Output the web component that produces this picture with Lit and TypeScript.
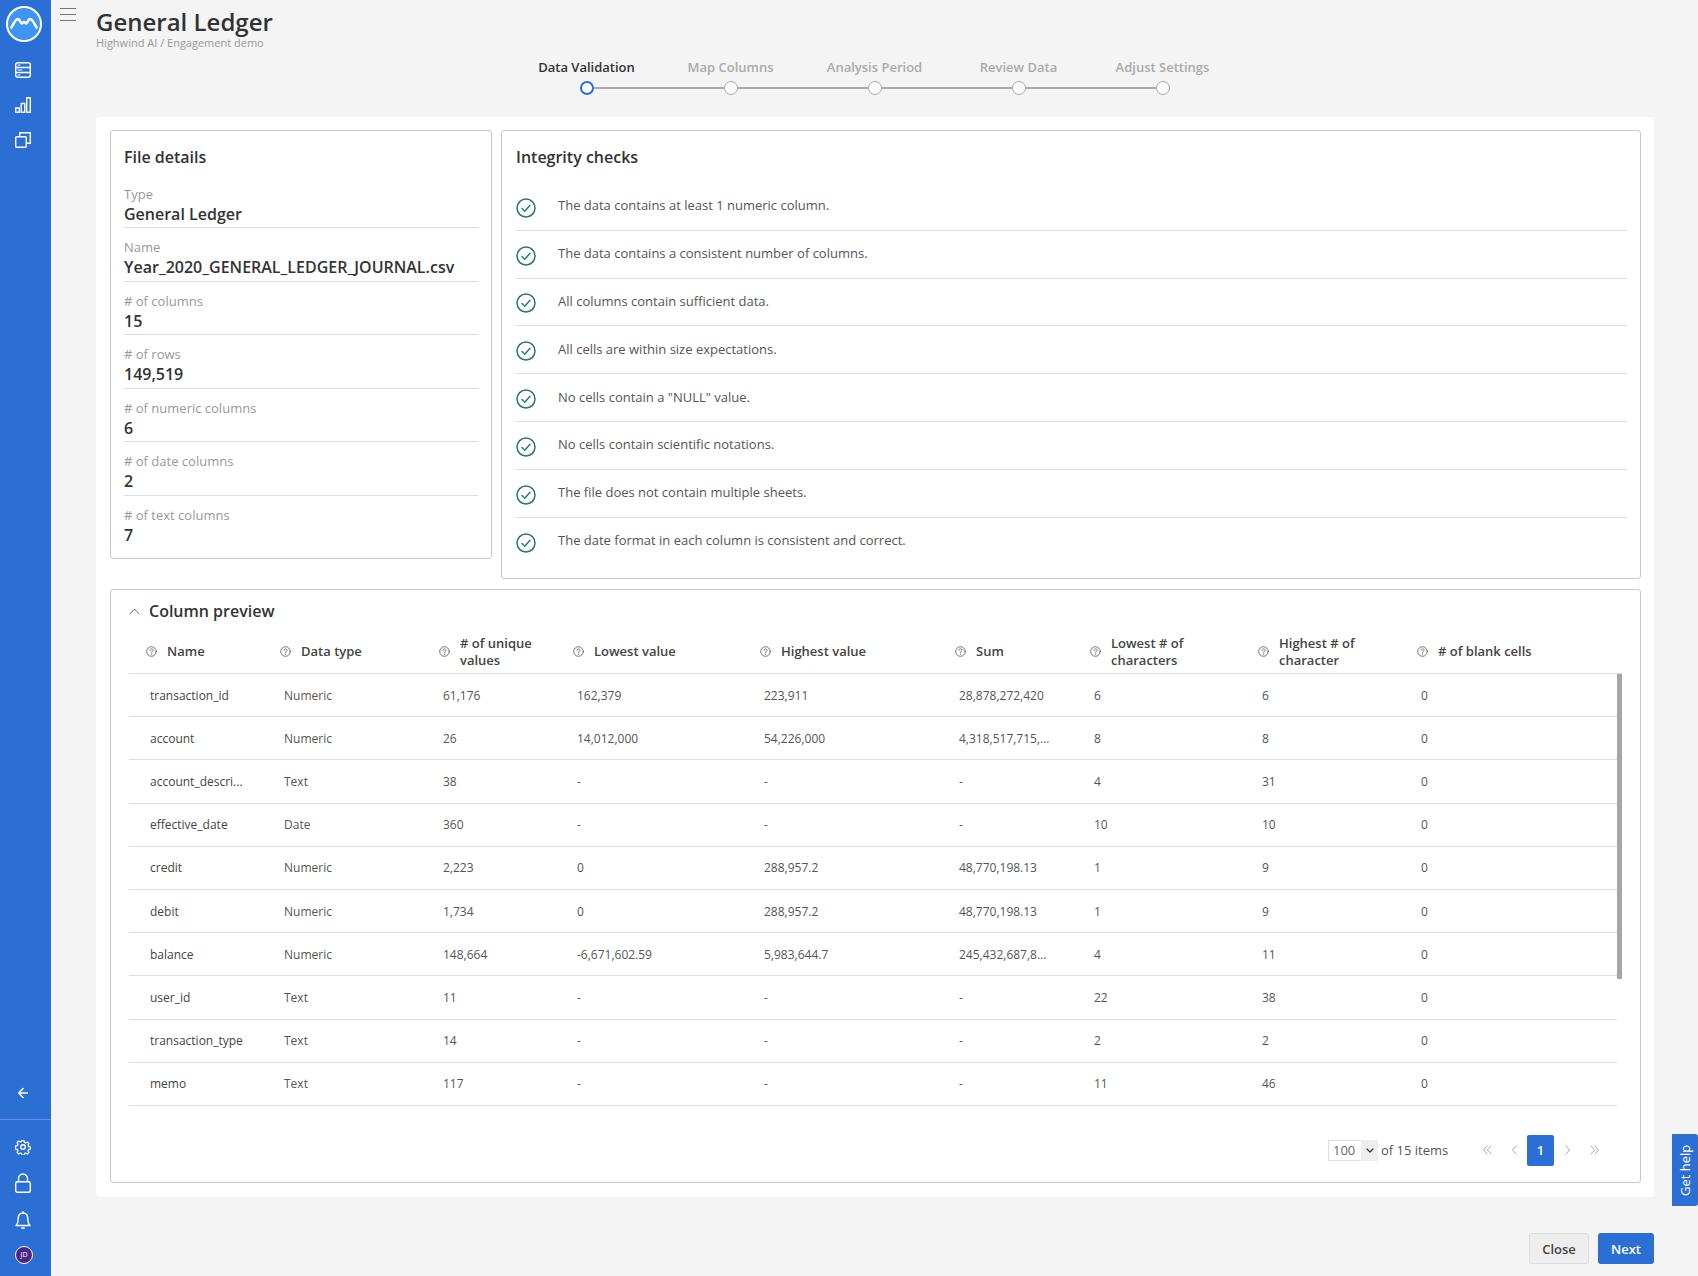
import { LitElement, html, css, svg } from 'lit';
import { customElement } from 'lit/decorators.js';

const steps = ['Data Validation', 'Map Columns', 'Analysis Period', 'Review Data', 'Adjust Settings'];

const details = [
  ['Type', 'General Ledger'],
  ['Name', 'Year_2020_GENERAL_LEDGER_JOURNAL.csv'],
  ['# of columns', '15'],
  ['# of rows', '149,519'],
  ['# of numeric columns', '6'],
  ['# of date columns', '2'],
  ['# of text columns', '7'],
];

const checks = [
  'The data contains at least 1 numeric column.',
  'The data contains a consistent number of columns.',
  'All columns contain sufficient data.',
  'All cells are within size expectations.',
  'No cells contain a "NULL" value.',
  'No cells contain scientific notations.',
  'The file does not contain multiple sheets.',
  'The date format in each column is consistent and correct.',
];

const headers = [
  ['Name'],
  ['Data type'],
  ['# of unique', 'values'],
  ['Lowest value'],
  ['Highest value'],
  ['Sum'],
  ['Lowest # of', 'characters'],
  ['Highest # of', 'character'],
  ['# of blank cells'],
];

const rows = [
  ['transaction_id', 'Numeric', '61,176', '162,379', '223,911', '28,878,272,420', '6', '6', '0'],
  ['account', 'Numeric', '26', '14,012,000', '54,226,000', '4,318,517,715,...', '8', '8', '0'],
  ['account_descri...', 'Text', '38', '-', '-', '-', '4', '31', '0'],
  ['effective_date', 'Date', '360', '-', '-', '-', '10', '10', '0'],
  ['credit', 'Numeric', '2,223', '0', '288,957.2', '48,770,198.13', '1', '9', '0'],
  ['debit', 'Numeric', '1,734', '0', '288,957.2', '48,770,198.13', '1', '9', '0'],
  ['balance', 'Numeric', '148,664', '-6,671,602.59', '5,983,644.7', '245,432,687,8...', '4', '11', '0'],
  ['user_id', 'Text', '11', '-', '-', '-', '22', '38', '0'],
  ['transaction_type', 'Text', '14', '-', '-', '-', '2', '2', '0'],
  ['memo', 'Text', '117', '-', '-', '-', '11', '46', '0'],
];

const icon = (w: number, h: number, body: unknown) => html`
  <svg width=${w} height=${h} viewBox="0 0 ${w} ${h}" fill="none" stroke="currentColor" stroke-width="1.4"
    stroke-linecap="round" stroke-linejoin="round">${body}</svg>`;

const helpIcon = icon(11, 11, svg`
  <circle cx="5.5" cy="5.5" r="4.8" stroke-width="0.8" />
  <path d="M4 4.3c0-1 .7-1.5 1.5-1.5s1.5.5 1.5 1.4c0 1.2-1.5 1.2-1.5 2.5" stroke-width="0.8" />
  <path d="M5.5 8.1v.2" stroke-width="0.9" />`);

const checkIcon = icon(20, 20, svg`
  <circle cx="10" cy="10" r="9" stroke-width="1.5" />
  <path d="M6 10.4l2.8 2.8 5.2-6" stroke-width="1.4" />`);

@customElement('app-root')
export class AppRoot extends LitElement {
  static styles = css`
    :host {
      display: flex;
      width: 1698px;
      min-height: 1276px;
      background: #f4f4f4;
      font-family: 'Open Sans', sans-serif;
      color: #333;
      position: relative;
    }

    .sidebar {
      width: 51px;
      height: 1276px;
      flex: none;
      background: #2c6fd4;
      color: #fff;
      display: flex;
      flex-direction: column;
      box-sizing: border-box;
      padding-left: 15px;
    }
    .sidebar svg { display: block; }
    .logo { margin: 6px 0 0 -9px; height: 36px; }
    .nav { display: flex; flex-direction: column; gap: 19px; margin-top: 20px; }
    .spacer { flex: 1; }
    .back { padding-left: 3px; height: 12px; margin-bottom: 20px; }
    .rule { height: 1px; background: #5b93e3; margin: 0 0 19px -15px; }
    .bottom { display: flex; flex-direction: column; align-items: flex-start; }
    .avatar {
      width: 18px;
      height: 18px;
      box-sizing: border-box;
      border-radius: 50%;
      border: 1px solid #fff;
      background: #4a2586;
      font-size: 7px;
      line-height: 16px;
      text-align: center;
      margin: 17px 0 12px;
    }

    .main { flex: 1; display: flex; flex-direction: column; min-width: 0; }

    .top { display: flex; height: 55px; padding-left: 9px; }
    .burger { width: 16px; margin: 8px 20px 0 0; color: #777; }
    .burger span { display: block; height: 1px; background: #777; margin-bottom: 5px; }
    h1 { margin: 8px 0 0; font-size: 24px; line-height: 28px; font-weight: 600; color: #333; }
    .crumb { font-size: 11px; line-height: 14px; color: #999; margin-top: 0; }

    .stepper { width: 720px; margin: 0 auto; height: 62px; }
    .labels { display: grid; grid-template-columns: repeat(5, 144px); height: 26px; }
    .labels div { text-align: center; font-size: 13px; line-height: 24px; font-weight: 600; color: #aaa; }
    .labels .on { color: #333; }
    .track { display: flex; align-items: center; padding-left: 65px; }
    .dot {
      width: 14px;
      height: 14px;
      box-sizing: border-box;
      flex: none;
      border-radius: 50%;
      border: 1px solid #aaa;
      background: #fff;
    }
    .dot.on { border: 2px solid #2c6fd4; }
    .line { width: 130px; height: 2px; background: #aaa; flex: none; }

    .card {
      margin-left: 45px;
      width: 1558px;
      height: 1080px;
      box-sizing: border-box;
      background: #fff;
      border-radius: 4px;
      padding: 13px 13px 14px 14px;
      display: flex;
      flex-direction: column;
      gap: 10px;
    }
    .boxes { display: flex; gap: 9px; align-items: flex-start; }
    .box { border: 1px solid #c8c8c8; border-radius: 3px; box-sizing: border-box; background: #fff; }
    h2 { margin: 0; font-size: 16px; line-height: 24px; font-weight: 600; color: #333; }

    .file { width: 382px; height: 429px; padding: 14px 13px 0; }
    .file h2 { height: 29.5px; }
    .detail { height: 53.5px; box-sizing: border-box; padding-top: 9px; border-bottom: 1px solid #ddd; }
    .detail:last-child { border-bottom: 0; }
    .detail label { display: block; font-size: 13px; line-height: 20px; color: #999; }
    .detail div { font-size: 16px; line-height: 20px; font-weight: 600; color: #333; }

    .integrity { width: 1140px; height: 449px; padding: 14px 13px 0 14px; }
    .integrity h2 { height: 38px; }
    .check {
      height: 47.8px;
      box-sizing: border-box;
      display: flex;
      align-items: center;
      gap: 22px;
      border-bottom: 1px solid #ddd;
      font-size: 13px;
      color: #555;
    }
    .check:last-child { border-bottom: 0; }
    .check svg { color: #26786c; flex: none; margin-top: 3px; }
    .check span { margin-top: -2px; }

    .preview { height: 594px; padding: 0 0 0 18px; display: flex; flex-direction: column; }
    .preview-head { display: flex; align-items: center; gap: 9px; height: 40px; padding-top: 2px; box-sizing: border-box; }
    .preview-head svg { color: #666; margin-top: 1px; }
    .grid {
      display: grid;
      grid-template-columns: 134px 159px 134px 187px 195px 135px 168px 159px 217px;
      width: 1488px;
    }
    .thead { height: 43px; align-items: center; width: 1493px; border-bottom: 1px solid #ddd; box-sizing: content-box; }
    .th {
      display: flex;
      align-items: center;
      gap: 10px;
      padding-left: 17px;
      font-size: 13px;
      line-height: 17px;
      font-weight: 600;
      color: #444;
    }
    .th svg { flex: none; color: #555; }
    .tbody { position: relative; width: 1493px; }
    .thumb { position: absolute; left: 1488px; top: 0; width: 5px; height: 305px; background: #a6a6a6; }
    .row { height: 43.2px; box-sizing: border-box; border-bottom: 1px solid #ddd; align-items: center; }
    .td { padding-left: 21px; font-size: 12px; color: #555; white-space: nowrap; }
    .td.name { color: #444; }

    .pager {
      display: flex;
      align-items: center;
      margin-top: 29px;
      padding-left: 1199px;
      height: 31px;
      font-size: 13px;
      color: #555;
    }
    .select {
      width: 50px;
      height: 21px;
      box-sizing: border-box;
      border: 1px solid #ddd;
      display: flex;
      font-size: 13px;
      line-height: 19px;
      color: #666;
      padding-left: 4px;
      margin-right: 3px;
      position: relative;
    }
    .select span { flex: 1; }
    .select i {
      width: 17px;
      margin-right: -1px;
      margin-top: -1px;
      height: 21px;
      background: #eee;
      display: flex;
      align-items: center;
      justify-content: center;
      color: #333;
    }
    .total { width: 92px; flex: none; }
    .pg { width: 27px; display: flex; justify-content: center; color: #aaa; }
    .pg.first { margin-right: 0; }
    .current {
      width: 27px;
      height: 31px;
      background: #2c6fd4;
      color: #fff;
      border-radius: 2px;
      text-align: center;
      line-height: 31px;
      font-weight: 600;
      font-size: 13px;
    }

    .actions { display: flex; justify-content: flex-end; gap: 9px; padding-right: 44px; margin-top: 36px; }
    button {
      height: 31px;
      border-radius: 3px;
      font-family: inherit;
      font-size: 13px;
      font-weight: 600;
      padding: 0;
      box-sizing: border-box;
    }
    .close { width: 60px; background: #eee; border: 1px solid #ddd; color: #444; }
    .next { width: 56px; background: #2c6fd4; border: 0; color: #fff; }

    .help {
      position: absolute;
      right: 0;
      top: 1134px;
      width: 26px;
      height: 72px;
      background: #2c6fd4;
      color: #fff;
      border-radius: 3px 0 0 3px;
      font-size: 13px;
      writing-mode: vertical-rl;
      transform: rotate(180deg);
      text-align: center;
      line-height: 26px;
    }
  `;

  render() {
    return html`
      ${this.renderSidebar()}
      <div class="main">
        <div class="top">
          <div class="burger"><span></span><span></span><span></span></div>
          <div>
            <h1>General Ledger</h1>
            <div class="crumb">Highwind AI / Engagement demo</div>
          </div>
        </div>
        <div class="stepper">
          <div class="labels">
            ${steps.map((s, i) => html`<div class=${i === 0 ? 'on' : ''}>${s}</div>`)}
          </div>
          <div class="track">
            ${steps.map((_, i) => html`
              ${i > 0 ? html`<div class="line"></div>` : ''}
              <div class="dot ${i === 0 ? 'on' : ''}"></div>`)}
          </div>
        </div>
        <div class="card">
          <div class="boxes">
            <div class="box file">
              <h2>File details</h2>
              ${details.map(d => html`<div class="detail"><label>${d[0]}</label><div>${d[1]}</div></div>`)}
            </div>
            <div class="box integrity">
              <h2>Integrity checks</h2>
              ${checks.map(c => html`<div class="check">${checkIcon}<span>${c}</span></div>`)}
            </div>
          </div>
          ${this.renderPreview()}
        </div>
        <div class="actions">
          <button class="close">Close</button>
          <button class="next">Next</button>
        </div>
      </div>
      <div class="help">Get help</div>
    `;
  }

  renderSidebar() {
    return html`
      <div class="sidebar">
        <div class="logo">
          <svg width="36" height="36" viewBox="0 0 36 36">
            <circle cx="18" cy="18" r="17" fill="#3d95f5" stroke="#fff" stroke-width="2" />
            <path d="M5.5 21.5C8 16.5 10 13 12 13c1.8 0 2.5 4.5 3.8 4.5 1 0 1.2-1.5 2.2-1.5s1.2 1.5 2.2 1.5c1.3 0 2-4.5 3.8-4.5 2 0 4 3.5 6.5 8.5"
              fill="none" stroke="#fff" stroke-width="2.6" stroke-linecap="round" stroke-linejoin="round" />
          </svg>
        </div>
        <div class="nav">
          ${icon(16, 16, svg`
            <rect x="0.7" y="0.7" width="14.6" height="14.6" rx="2" />
            <path d="M1 5.5h14M1 10.5h14" />
            <path d="M3 3.1h2M3 8h4M3 13h2" stroke-width="1" />`)}
          ${icon(16, 16, svg`
            <rect x="0.7" y="11" width="3.6" height="4.3" />
            <rect x="6.2" y="6.5" width="3.6" height="8.8" />
            <rect x="11.7" y="0.7" width="3.6" height="14.6" />`)}
          ${icon(16, 16, svg`
            <rect x="0.7" y="4.7" width="10.6" height="10.6" rx="1" />
            <path d="M4.7 4.5V.7h10.6v10.6h-3.8" />`)}
        </div>
        <div class="spacer"></div>
        <div class="bottom">
          <div class="back">
            ${icon(10, 12, svg`<path d="M9.5 6H1M5 1.5L.8 6 5 10.500" stroke-width="1.5" />`)}
          </div>
          <div class="rule" style="width:51px"></div>
          ${icon(16, 16, svg`
            <circle cx="8" cy="8" r="2.300" />
            <path d="M6.8.8h2.400l.4 2 1.500.7 1.800-1 1.700 1.700-1 1.800.7 1.500 2 .4v2.400l-2 .4-.7 1.500 1 1.800-1.700 1.700-1.800-1-1.500.7-.4 2H6.800l-.4-2-1.500-.7-1.800 1-1.700-1.700 1-1.800-.7-1.500-2-.4V6.800l2-.4.7-1.500-1-1.800 1.700-1.700 1.800 1 1.500-.7z"
              transform="translate(0.800 0.800) scale(0.900)" />`)}
          <div style="height:18px"></div>
          ${icon(16, 20, svg`
            <rect x="0.7" y="8.700" width="14.600" height="10.600" rx="1.800" />
            <path d="M3.500 8.500V5.500a4.500 4.500 0 0 1 9 0v3" />`)}
          <div style="height:18px"></div>
          ${icon(16, 18, svg`
            <path d="M1 14.500h14c-1.500-1.500-2.200-3-2.200-6.500C12.800 4.500 11 2 8 2S3.200 4.500 3.200 8c0 3.500-.7 5-2.200 6.500z" />
            <path d="M8 .8V2M6.700 17h2.600" />`)}
          <div class="avatar">JD</div>
        </div>
      </div>
    `;
  }

  renderPreview() {
    const chev = (d: string) => icon(12, 12, svg`<path d=${d} stroke-width="1" />`);
    return html`
      <div class="box preview">
        <div class="preview-head">
          ${icon(11, 7, svg`<path d="M.8 6L5.500 1l4.700 5" stroke-width="1" />`)}
          <h2>Column preview</h2>
        </div>
        <div class="grid thead">
          ${headers.map(h => html`
            <div class="th">${helpIcon}<span>${h[0]}${h[1] ? html`<br />${h[1]}` : ''}</span></div>`)}
        </div>
        <div class="tbody">
          <div class="thumb"></div>
          ${rows.map(r => html`
            <div class="grid row">
              ${r.map((c, i) => html`<div class="td ${i === 0 ? 'name' : ''}">${c}</div>`)}
            </div>`)}
        </div>
        <div class="pager">
          <div class="select">
            <span>100</span>
            <i>${icon(8, 5, svg`<path d="M1 1l3 3 3-3" stroke-width="1.200" />`)}</i>
          </div>
          <div class="total">of 15 items</div>
          <div class="pg">${chev('M6 2L2.500 6 6 10M10 2L6.500 6 10 10')}</div>
          <div class="pg">${chev('M8 2L4.500 6 8 10')}</div>
          <div class="current">1</div>
          <div class="pg">${chev('M4 2l3.500 4L4 10')}</div>
          <div class="pg">${chev('M2 2l3.500 4L2 10M6 2l3.500 4L6 10')}</div>
        </div>
      </div>
    `;
  }
}
